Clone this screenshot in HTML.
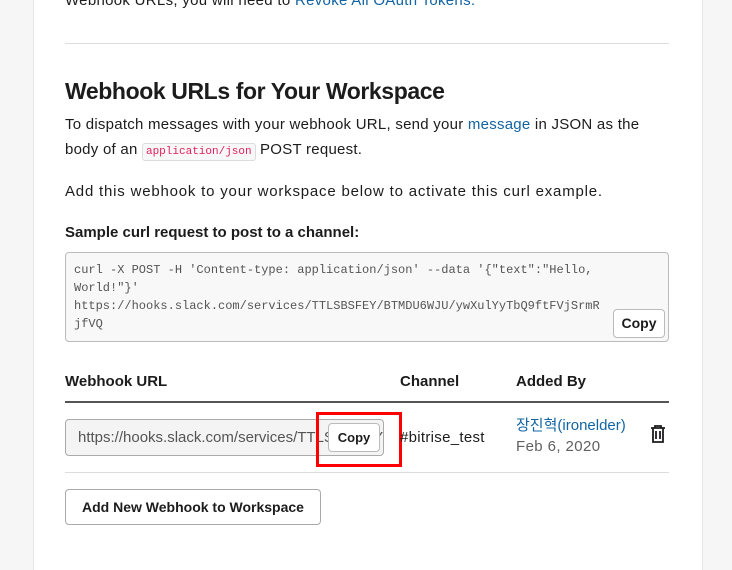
<!DOCTYPE html>
<html><head><style>
body{margin:0;width:732px;height:552px;background:#f6f6f6;font-family:"Liberation Sans","Noto Sans CJK KR",sans-serif;color:#1d1c1d;overflow:hidden;position:relative}
.card{position:absolute;left:33px;top:-10px;width:668px;height:580px;background:#fff;border-left:1px solid #e8e8e8;border-right:1px solid #e8e8e8}
.a{position:absolute;white-space:nowrap}
a{color:#1264a3;text-decoration:none}
.p{font-size:15px}
.mono{font-family:"Liberation Mono",monospace}
.btn{position:absolute;background:#fff;border:1px solid #bbb;border-radius:4px;font-weight:bold;font-size:13px;text-align:center;box-sizing:border-box}
</style></head><body>
<div class="card"></div>
<div class="a p" style="left:65px;top:-8px;letter-spacing:0.3px">Webhook URLs, you will need to <a>Revoke All OAuth Tokens.</a></div>
<div class="a" style="left:65px;top:43px;width:604px;height:1px;background:#ddd"></div>
<div class="a" style="left:65px;top:78px;font-size:23px;font-weight:bold;letter-spacing:-0.4px">Webhook URLs for Your Workspace</div>
<div class="a p" style="left:65px;top:116px;letter-spacing:0.25px">To dispatch messages with your webhook URL, send your <a>message</a> in JSON as the</div>
<div class="a p" style="left:65px;top:141px;letter-spacing:0.25px">body of an <span class="mono" style="font-size:11px;color:#e01e5a;background:#f8f8f8;border:1px solid #ddd;border-radius:3px;padding:2px 3px;letter-spacing:0">application/json</span> POST request.</div>
<div class="a p" style="left:65px;top:183px;letter-spacing:0.8px">Add this webhook to your workspace below to activate this curl example.</div>
<div class="a" style="left:65px;top:224px;font-size:15px;font-weight:bold">Sample curl request to post to a channel:</div>
<div class="a mono" style="left:65px;top:252px;width:604px;height:90px;box-sizing:border-box;border:1px solid #bbb;border-radius:4px;background:#f8f8f8;font-size:12px;line-height:18px;color:#555;padding:8px 8px;white-space:pre">curl -X POST -H 'Content-type: application/json' --data '{"text":"Hello,
World!"}'
https://hooks.slack.com/services/TTLSBSFEY/BTMDU6WJU/ywXulYyTbQ9ftFVjSrmR
jfVQ</div>
<div class="btn" style="left:613px;top:309px;width:52px;height:29px;line-height:27px;font-size:14px">Copy</div>
<div class="a p" style="left:65px;top:373px;font-weight:bold">Webhook URL</div>
<div class="a p" style="left:400px;top:373px;font-weight:bold">Channel</div>
<div class="a p" style="left:516px;top:373px;font-weight:bold">Added By</div>
<div class="a" style="left:65px;top:401px;width:604px;height:2px;background:#555"></div>
<div class="a" style="left:65px;top:419px;width:319px;height:37px;box-sizing:border-box;border:1px solid #aaa;border-radius:4px;background:#f4f4f4;overflow:hidden;color:#555;font-size:15px;line-height:35px;padding-left:12px">https://hooks.slack.com/services/TTLSBSFEY</div>
<div class="btn" style="left:328px;top:423px;width:52px;height:29px;line-height:27px">Copy</div>
<div class="a" style="left:316px;top:412px;width:86px;height:55px;border:3px solid #f00;box-sizing:border-box"></div>
<div class="a p" style="left:400px;top:429px;letter-spacing:0.3px">#bitrise_test</div>
<div class="a p" style="left:516px;top:414px"><a>장진혁(ironelder)</a></div>
<div class="a p" style="left:516px;top:438px;color:#616061;letter-spacing:0.4px">Feb 6, 2020</div>
<svg class="a" style="left:650px;top:425px" width="16" height="18" viewBox="0 0 16 18"><path d="M1 3h14M5 3V1h6v2M3 3v14h10V3M6 6v8M10 6v8" fill="none" stroke="#1d1c1d" stroke-width="1.8"/></svg>
<div class="a" style="left:65px;top:472px;width:604px;height:1px;background:#ddd"></div>
<div class="btn" style="left:65px;top:489px;width:256px;height:36px;line-height:34px;font-size:14px;border-color:#aaa">Add New Webhook to Workspace</div>
</body></html>
